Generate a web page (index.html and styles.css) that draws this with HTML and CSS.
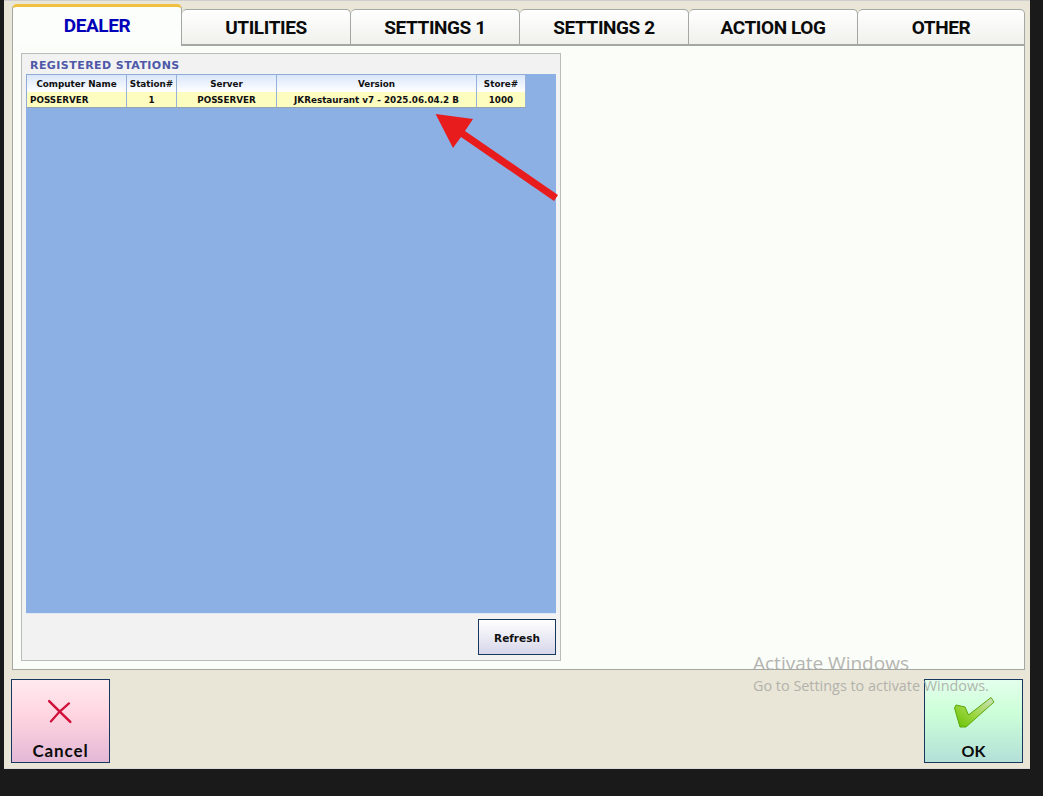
FILE: index.html
```html
<!DOCTYPE html>
<html lang="en">
<head>
<meta charset="UTF-8">
<title>Dealer</title>
<link rel="stylesheet" href="styles.css">
</head>
<body>
    <div class="window">
        <div class="tabs">
            <div class="tab active">DEALER</div>
            <div class="tab">UTILITIES</div>
            <div class="tab">SETTINGS 1</div>
            <div class="tab">SETTINGS 2</div>
            <div class="tab">ACTION LOG</div>
            <div class="tab last">OTHER</div>
        </div>
        <div class="pane">
            <div class="panel">
                <div class="panel-title">REGISTERED STATIONS</div>
                <div class="grid-area">
                    <div class="grid-row grid-head">
                        <div class="cell col-name">Computer Name</div>
                        <div class="cell col-station">Station#</div>
                        <div class="cell col-server">Server</div>
                        <div class="cell col-version">Version</div>
                        <div class="cell col-store">Store#</div>
                    </div>
                    <div class="grid-row grid-item">
                        <div class="cell col-name left">POSSERVER</div>
                        <div class="cell col-station">1</div>
                        <div class="cell col-server">POSSERVER</div>
                        <div class="cell col-version">JKRestaurant v7 - 2025.06.04.2 B</div>
                        <div class="cell col-store">1000</div>
                    </div>
                </div>
                <div class="panel-foot">
                    <button class="refresh">Refresh</button>
                </div>
            </div>
        </div>
        <div class="actions">
            <button class="big-btn cancel">
                <svg width="27" height="27" viewBox="0 0 30 30">
                    <path d="M3.5 3.5 C9 9 17 17 27 26.5" fill="none" stroke="#d0103a" stroke-width="2.8" stroke-linecap="round"/>
                    <path d="M25.5 6 C18 12 11 19 5.5 26" fill="none" stroke="#d0103a" stroke-width="2.6" stroke-linecap="round"/>
                </svg>
                <span>Cancel</span>
            </button>
            <button class="big-btn ok">
                <svg width="41" height="31" viewBox="0 0 41 31">
                    <defs>
                        <linearGradient id="checkFill" x1="0" y1="1" x2="1" y2="0">
                            <stop offset="0" stop-color="#64c000"/>
                            <stop offset="0.45" stop-color="#9cd640"/>
                            <stop offset="1" stop-color="#cfe0c4"/>
                        </linearGradient>
                    </defs>
                    <path d="M0.5 11 L2 8 L11 10 L14.5 18 L37 0.5 L40 5 L12 30 L6 30 Z" fill="url(#checkFill)" stroke="#5aa80a" stroke-width="1" stroke-linejoin="round"/>
                </svg>
                <span>OK</span>
            </button>
        </div>
    </div>

    <!-- annotation drawn on top of the screenshot -->
    <svg class="arrow" width="1043" height="796" viewBox="0 0 1043 796">
        <polygon points="435.6,114 473,119 465,131 558,195 554,201 461,137 453,148" fill="#e81c1c"/>
    </svg>

    <div class="watermark">
        <div class="wm-title">Activate Windows</div>
        <div class="wm-sub">Go to Settings to activate Windows.</div>
    </div>
</body>
</html>
```

FILE: styles.css
```css
html, body {
    margin: 0;
    height: 796px;
    overflow: hidden;
}
body {
    background-color: #1a1a1a;
    font-family: "DejaVu Sans", sans-serif;
    padding-left: 4px;
    position: relative;
}
.window {
    width: 1026px;
    height: 769px;
    box-sizing: border-box;
    background-color: #e9e6d7;
    border-top: 1px solid #cfcfcf;
    border-bottom: 1px solid #d8d8d8;
    padding: 3px 5px 0 8px;
    display: flex;
    flex-direction: column;
}

/* tabs */
.tabs {
    display: flex;
    align-items: flex-end;
    height: 41px;
    flex: none;
    position: relative;
    z-index: 1;
}
.tab {
    flex: none;
    width: 169px;
    height: 36px;
    box-sizing: border-box;
    border: 1px solid #a3a8a3;
    border-left: none;
    border-radius: 5px 5px 0 0;
    background: linear-gradient(to bottom, #ffffff, #f0f0ec);
    font-family: "Roboto", sans-serif;
    font-weight: 700;
    font-size: 19px;
    letter-spacing: -0.4px;
    color: #0b0b0b;
    display: flex;
    align-items: center;
    justify-content: center;
}
.tab.active {
    width: 170px;
    height: 42px;
    margin-bottom: -1px;
    border: 1px solid #a3a8a3;
    border-top: 3px solid #f0c040;
    border-bottom: none;
    background: #fcfefb;
    color: #0000b8;
    padding-bottom: 2px;
}
.tab.last {
    width: 167px;
}

/* main pane */
.pane {
    width: 1013px;
    height: 625px;
    flex: none;
    box-sizing: border-box;
    border: 1px solid #a3a8a3;
    background-color: #fbfdf9;
    padding: 7px 0 0 8px;
}
.panel {
    width: 540px;
    height: 608px;
    box-sizing: border-box;
    border: 1px solid #b9bcb9;
    background-color: #f2f2f2;
    padding: 0 4px;
    display: flex;
    flex-direction: column;
}
.panel-title {
    height: 20px;
    line-height: 24px;
    padding-left: 4px;
    font-size: 11px;
    font-weight: bold;
    color: #4e58a8;
    letter-spacing: 0.44px;
}
.grid-area {
    width: 530px;
    height: 540px;
    flex: none;
    box-sizing: border-box;
    background-color: #8cb0e4;
    border-bottom: 1px solid #dfe8f4;
}
.grid-row {
    display: flex;
    width: 500px;
}
.cell {
    box-sizing: border-box;
    font-size: 8.8px;
    font-weight: bold;
    color: #101010;
    text-align: center;
    border-right: 1px solid #97b1d8;
    white-space: nowrap;
}
.cell.left {
    text-align: left;
    padding-left: 3px;
}
.grid-head {
    height: 18px;
    border-top: 1px solid #8fabd6;
    box-sizing: border-box;
}
.grid-head .cell {
    line-height: 19px;
    background: linear-gradient(to bottom, #d9e6fb, #ffffff);
}
.grid-item {
    height: 16px;
    box-sizing: border-box;
    border-bottom: 1px solid #93a3b8;
}
.grid-item .cell {
    line-height: 16px;
    background-color: #fefdc0;
}
.col-name { width: 101px; border-left: 1px solid #8fabd6; }
.col-station { width: 50px; }
.col-server { width: 100px; }
.col-version { width: 200px; }
.col-store { width: 49px; }

.panel-foot {
    display: flex;
    justify-content: flex-end;
    padding-top: 5px;
}
.refresh {
    width: 78px;
    height: 36px;
    border: 1px solid #17375e;
    border-radius: 0;
    background: linear-gradient(to bottom, #ffffff, #d6d6ea);
    font-family: "DejaVu Sans", sans-serif;
    font-size: 10.5px;
    font-weight: bold;
    color: #101010;
    padding: 1px 0 0;
}

/* bottom buttons */
.actions {
    display: flex;
    justify-content: space-between;
    padding-top: 9px;
    margin-left: -1px;
    width: 1012px;
}
.big-btn {
    width: 99px;
    height: 84px;
    box-sizing: border-box;
    border: 1px solid #17375e;
    padding: 0;
    position: relative;
    font-family: "Lato", sans-serif;
    font-weight: 700;
    font-size: 17px;
    color: #0b0b0b;
}
.big-btn svg {
    position: absolute;
}
.big-btn span {
    position: absolute;
    left: 0;
    right: 0;
    bottom: 1px;
    text-align: center;
}
.cancel {
    background: linear-gradient(to bottom, #ffeaee, #ffd4e0 45%, #e2b8d6);
}
.cancel span {
    letter-spacing: 0.9px;
}
.cancel svg {
    left: 34px;
    top: 18px;
}
.ok {
    background: linear-gradient(to bottom, #e4ffec, #ccffd8 40%, #b4e0d8);
}
.ok span {
    font-size: 16px;
    bottom: 2px;
}
.ok svg {
    left: 29px;
    top: 17px;
}

.arrow {
    position: absolute;
    left: 0;
    top: 0;
    pointer-events: none;
}
.watermark {
    position: absolute;
    left: 753px;
    top: 651px;
    font-family: "Open Sans", sans-serif;
    color: #a9a9a5;
    opacity: 0.85;
    pointer-events: none;
}
.wm-title {
    font-size: 19px;
    line-height: 24px;
}
.wm-sub {
    font-size: 14.4px;
    line-height: 20px;
    margin-top: 1px;
}
```
